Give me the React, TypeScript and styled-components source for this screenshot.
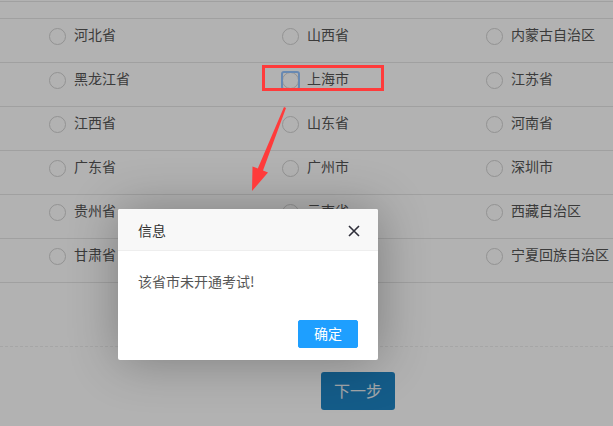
import React from 'react';
import styled, { createGlobalStyle } from 'styled-components';

const GlobalStyle = createGlobalStyle`
  html, body {
    margin: 0;
    padding: 0;
    background: #fff;
    overflow: hidden;
    font-family: 'Noto Sans CJK SC', 'Noto Sans', sans-serif;
  }
`;

const Page = styled.div`
  width: 613px;
  height: 426px;
  position: relative;
  overflow: hidden;
  background: #fff;
`;

const TableTop = styled.div`
  margin-top: 1px;
  height: 16px;
  border-top: 1px solid #e6e6e6;
`;

const Table = styled.div`
  border-bottom: 1px solid #e6e6e6;
`;

const Row = styled.div`
  display: grid;
  grid-template-columns: 233px 204px 1fr;
  height: 43px;
  box-sizing: content-box;
  padding-left: 49px;
  border-top: 1px solid #e6e6e6;
`;

const Cell = styled.label`
  display: flex;
  align-items: center;
  gap: 8px;
  height: 17px;
  margin-top: 7px;
  font-size: 14px;
  line-height: 17px;
  color: #555;
  white-space: nowrap;
`;

const Radio = styled.span<{ $focused?: boolean }>`
  position: relative;
  display: inline-block;
  box-sizing: border-box;
  width: 17px;
  height: 17px;
  margin-top: 3px;
  border: 1px solid #d2d2d2;
  border-radius: 50%;
  flex: none;
  ${(p) =>
    p.$focused &&
    `
    &::after {
      content: '';
      position: absolute;
      inset: -2px;
      border: 2px solid rgb(150, 196, 255);
      border-radius: 3px;
    }
  `}
`;

const Divider = styled.div`
  margin-top: 63px;
  border-top: 1px dashed #eee;
`;

const Footer = styled.div`
  padding: 25px 0 0 321px;
`;

const NextButton = styled.button`
  width: 74px;
  height: 38px;
  border: none;
  border-radius: 3px;
  background: #1e85c5;
  color: #e8eef3;
  font-family: inherit;
  font-size: 16px;
  padding: 0 0 2px;
`;

const Shade = styled.div`
  position: absolute;
  inset: 0;
  background: rgba(0, 0, 0, 0.3);
`;

const Dialog = styled.div`
  position: absolute;
  left: 118px;
  top: 209px;
  width: 260px;
  background: #fff;
  border-radius: 2px;
  box-shadow: 1px 1px 50px rgba(0, 0, 0, 0.3);
`;

const DialogTitle = styled.div`
  display: flex;
  align-items: center;
  justify-content: space-between;
  box-sizing: border-box;
  height: 42px;
  padding: 0 18px 0 20px;
  background: #f8f8f8;
  border-bottom: 1px solid #eee;
  border-radius: 2px 2px 0 0;
  font-size: 14px;
  color: #333;
`;

const CloseButton = styled.span`
  display: flex;
  width: 12px;
  height: 12px;
  margin-top: 3px;
`;

const DialogContent = styled.div`
  padding: 18px 20px 22px;
  font-size: 14px;
  line-height: 24px;
  color: #555;
`;

const DialogButtons = styled.div`
  display: flex;
  justify-content: flex-end;
  padding: 0 15px 12px;
`;

const ConfirmButton = styled.button`
  height: 28px;
  margin: 5px 5px 0;
  padding: 0 15px 1px;
  border: 1px solid #1e9fff;
  border-radius: 2px;
  background: #1e9fff;
  color: #fff;
  font-family: inherit;
  font-size: 14px;
  line-height: 25px;
`;

const Highlight = styled.div`
  position: absolute;
  left: 262px;
  top: 65px;
  width: 122px;
  height: 26px;
  box-sizing: border-box;
  border: 3px solid #ff3b3b;
`;

const ArrowMark = styled.svg`
  position: absolute;
  left: 245px;
  top: 100px;
`;

const rows: string[][] = [
  ['河北省', '山西省', '内蒙古自治区'],
  ['黑龙江省', '上海市', '江苏省'],
  ['江西省', '山东省', '河南省'],
  ['广东省', '广州市', '深圳市'],
  ['贵州省', '云南省', '西藏自治区'],
  ['甘肃省', '青海省', '宁夏回族自治区'],
];

export default function App() {
  return (
    <Page>
      <GlobalStyle />
      <TableTop />
      <Table>
        {rows.map((row) => (
          <Row key={row[0]}>
            {row.map((name) => (
              <Cell key={name}>
                <Radio $focused={name === '上海市'} />
                {name}
              </Cell>
            ))}
          </Row>
        ))}
      </Table>
      <Divider />
      <Footer>
        <NextButton>下一步</NextButton>
      </Footer>

      <Shade />

      <Dialog>
        <DialogTitle>
          信息
          <CloseButton>
            <svg width="12" height="12" viewBox="0 0 12 12">
              <path d="M1 1L11 11M11 1L1 11" stroke="#2f2f3a" strokeWidth="1.6" />
            </svg>
          </CloseButton>
        </DialogTitle>
        <DialogContent>该省市未开通考试!</DialogContent>
        <DialogButtons>
          <ConfirmButton>确定</ConfirmButton>
        </DialogButtons>
      </Dialog>

      <Highlight />
      <ArrowMark width="45" height="95" viewBox="0 0 45 95">
        <polygon
          points="39,7 41,8 18,70.5 23,72.5 7,91 7.5,66.5 12.8,68.5"
          fill="#ff3b3b"
        />
      </ArrowMark>
    </Page>
  );
}
